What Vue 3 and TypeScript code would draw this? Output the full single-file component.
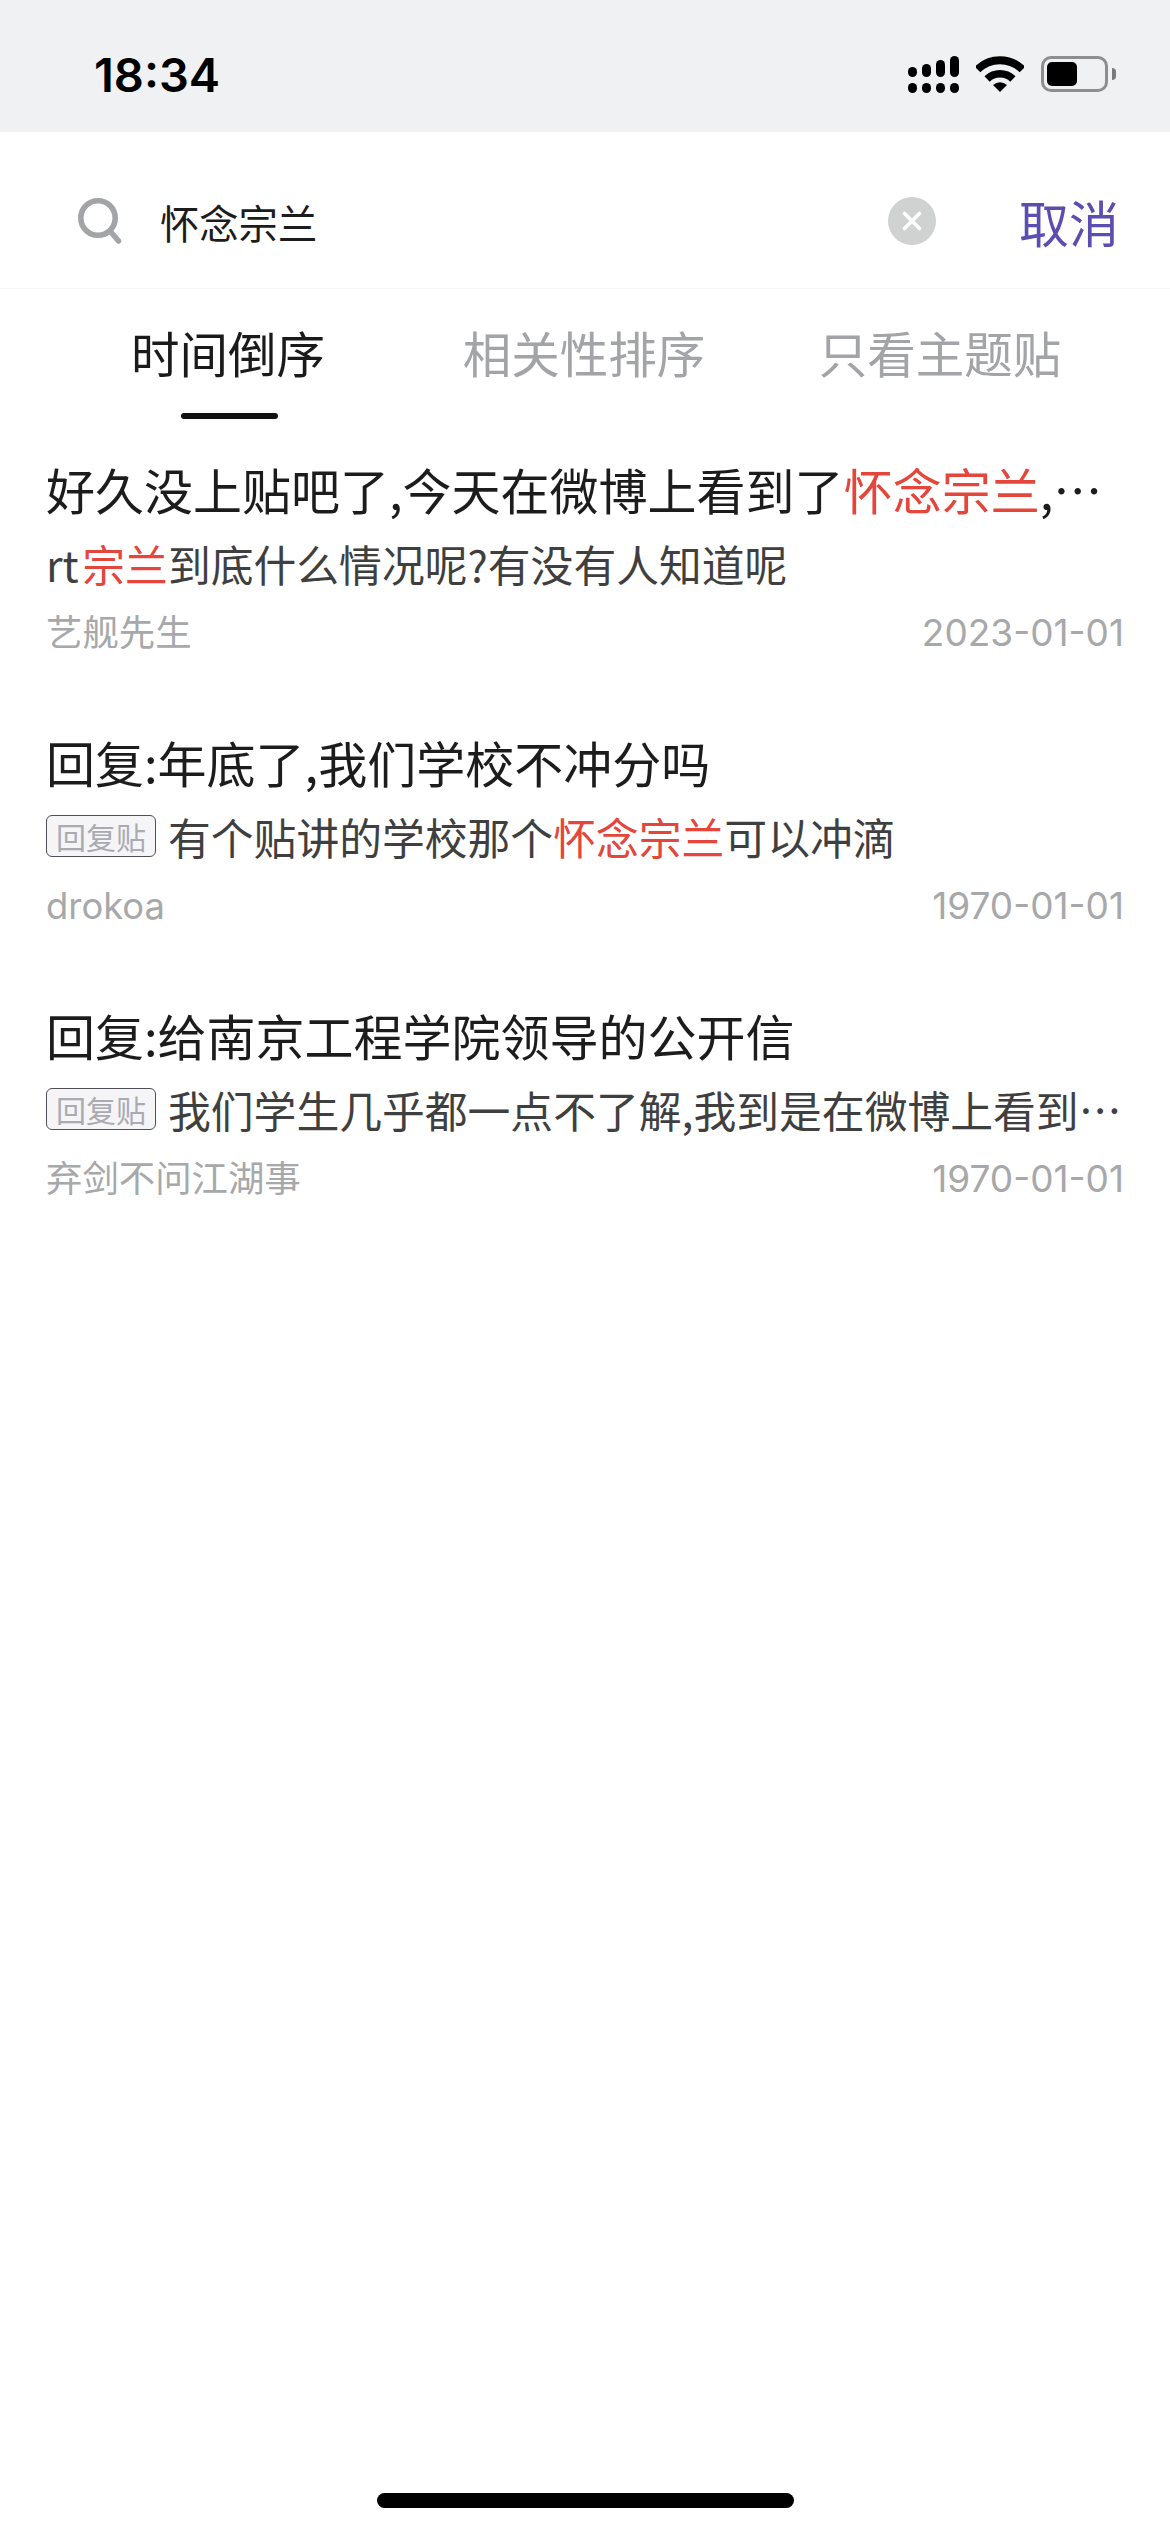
<template>
  <div class="page">
    <!-- 状态栏 -->
    <div class="status-bar">
      <span class="time">18:34</span>
      <div class="status-icons">
        <svg class="signal" width="51" height="37" viewBox="0 0 51 37">
          <rect v-for="bar in signalBars" :key="bar.x" :x="bar.x" :y="bar.y" width="9" :height="bar.h" rx="4.5" />
          <rect v-for="bar in signalBars" :key="bar.x + 'd'" :x="bar.x" y="27" width="9" height="10" rx="4.5" />
        </svg>
        <svg class="wifi" width="48" height="36" viewBox="0 0 48 36">
          <path d="M1.5 13.5A32 32 0 0 1 46.5 13.5" fill="none" stroke="#000" stroke-width="8" />
          <path d="M11.1 23A18.5 18.5 0 0 1 36.9 23" fill="none" stroke="#000" stroke-width="7.5" />
          <path d="M24 36L17 29A10 10 0 0 1 31 29Z" fill="#000" />
        </svg>
        <div class="battery">
          <div class="battery-level"></div>
          <div class="battery-nub"></div>
        </div>
      </div>
    </div>

    <!-- 搜索栏 -->
    <div class="search-bar">
      <svg class="search-icon" width="44" height="46" viewBox="0 0 44 46">
        <circle cx="20" cy="20" r="17.2" fill="none" stroke="#a3a4a8" stroke-width="5.6" />
        <line x1="32" y1="33" x2="40.5" y2="43" stroke="#a3a4a8" stroke-width="5.6" stroke-linecap="round" />
      </svg>
      <span class="keyword">{{ keyword }}</span>
      <svg class="clear-icon" width="48" height="48" viewBox="0 0 48 48">
        <circle cx="24" cy="24" r="24" fill="#d0d2d2" />
        <path d="M16.5 16.5L31.5 31.5M31.5 16.5L16.5 31.5" stroke="#fff" stroke-width="3.6" stroke-linecap="round" />
      </svg>
      <span class="cancel">取消</span>
    </div>

    <!-- 排序 -->
    <div class="tabs">
      <div v-for="(tab, index) in tabs" :key="tab" :class="['tab', { active: index === 0 }]">
        <span>{{ tab }}</span>
        <i class="tab-line"></i>
      </div>
    </div>

    <!-- 结果列表 -->
    <div class="result-list">
      <div v-for="item in results" :key="item.author" class="result-item">
        <div class="title">
          <template v-for="(part, i) in item.title" :key="i">
            <em v-if="part.hit">{{ part.text }}</em>
            <template v-else>{{ part.text }}</template>
          </template>
        </div>
        <div class="summary">
          <span v-if="item.reply" class="reply-tag">回复贴</span>
          <span class="summary-text">
            <template v-for="(part, i) in item.summary" :key="i">
              <em v-if="part.hit">{{ part.text }}</em>
              <template v-else>{{ part.text }}</template>
            </template>
          </span>
        </div>
        <div class="meta">
          <span>{{ item.author }}</span>
          <span class="date">{{ item.date }}</span>
        </div>
      </div>
    </div>

    <div class="home-bar"></div>
  </div>
</template>

<script setup lang="ts">
interface Part {
  text: string;
  hit?: boolean;
}

interface Result {
  title: Part[];
  summary: Part[];
  reply: boolean;
  author: string;
  date: string;
}

const keyword = '怀念宗兰';
const tabs = ['时间倒序', '相关性排序', '只看主题贴'];

const signalBars = [
  { x: 0, y: 11, h: 10 },
  { x: 14, y: 8, h: 13 },
  { x: 28, y: 4, h: 17 },
  { x: 42, y: 0, h: 21 }
];

const results: Result[] = [
  {
    title: [
      { text: '好久没上贴吧了,今天在微博上看到了' },
      { text: '怀念宗兰', hit: true },
      { text: ',不知道是什么情况' }
    ],
    summary: [
      { text: 'rt ' },
      { text: '宗兰', hit: true },
      { text: '到底什么情况呢?有没有人知道呢' }
    ],
    reply: false,
    author: '艺舰先生',
    date: '2023-01-01'
  },
  {
    title: [{ text: '回复:年底了,我们学校不冲分吗' }],
    summary: [
      { text: '有个贴讲的学校那个' },
      { text: '怀念宗兰', hit: true },
      { text: '可以冲滴' }
    ],
    reply: true,
    author: 'drokoa',
    date: '1970-01-01'
  },
  {
    title: [{ text: '回复:给南京工程学院领导的公开信' }],
    summary: [{ text: '我们学生几乎都一点不了解,我到是在微博上看到的一些消息' }],
    reply: true,
    author: '弃剑不问江湖事',
    date: '1970-01-01'
  }
];
</script>

<style>
html,
body {
  background: #fff;
}
</style>

<style scoped>
.page {
  position: relative;
  height: 2532px;
  overflow: hidden;
  background: #fff;
  font-family: "Inter", "Noto Sans CJK SC", sans-serif;
}

.status-bar {
  display: flex;
  justify-content: space-between;
  align-items: center;
  height: 132px;
  padding: 16px 55px 0 94px;
  box-sizing: border-box;
  background: #f0f1f3;
}

.time {
  font-size: 47px;
  font-weight: 600;
  color: #000;
}

.status-icons {
  display: flex;
  align-items: center;
  gap: 17px;
}

.battery {
  position: relative;
  width: 67px;
  height: 36px;
  margin-right: 7px;
  box-sizing: border-box;
  border: 3px solid #8e8e8e;
  border-radius: 10px;
  padding: 3px;
}

.battery-level {
  width: 30px;
  height: 24px;
  background: #000;
  border-radius: 5px;
}

.battery-nub {
  position: absolute;
  right: -11px;
  top: 9px;
  width: 4px;
  height: 12px;
  background: #7a7a7a;
  border-radius: 0 4px 4px 0;
}

.signal {
  fill: #000;
}

.search-bar {
  display: flex;
  align-items: center;
  height: 157px;
  padding: 22px 51px 0 78px;
  box-sizing: border-box;
  border-bottom: 1px solid #f5f5f5;
}

.keyword {
  flex: 1;
  margin-left: 38px;
  font-size: 39.3px;
  color: #1c1c1c;
}

.cancel {
  margin-left: 83px;
  font-size: 50px;
  color: #5c4db1;
}

.tabs {
  display: grid;
  grid-template-columns: repeat(3, 356px);
  height: 131px;
  padding-left: 50px;
}

.tab {
  display: flex;
  flex-direction: column;
  align-items: center;
  padding-top: 37px;
  font-size: 48.5px;
  line-height: 60px;
  color: #a3a4a7;
}

.tab-line {
  width: 97px;
  height: 6px;
  margin: 27px 0 0 2px;
  border-radius: 3px;
}

.tab.active {
  color: #1a1a1a;
}

.tab.active .tab-line {
  background: #111;
}

.result-list {
  display: flex;
  flex-direction: column;
  gap: 80px;
  padding: 42px 46px 0 46px;
  font-family: "Noto Sans CJK SC", sans-serif;
}

.title {
  margin-top: -3px;
  font-size: 49px;
  line-height: 60px;
  color: #1c1c1c;
  white-space: nowrap;
  overflow: hidden;
  text-overflow: ellipsis;
}

em {
  font-style: normal;
  color: #e5463c;
}

.summary {
  display: flex;
  align-items: center;
  gap: 12px;
  margin: 14px -4px 0 0;
  height: 60px;
  font-size: 42.8px;
  color: #3f3f3f;
}

.summary-text {
  flex: 1;
  min-width: 0;
  white-space: nowrap;
  overflow: hidden;
  text-overflow: ellipsis;
  word-spacing: -6px;
}

.reply-tag {
  flex-shrink: 0;
  width: 110px;
  height: 42px;
  box-sizing: border-box;
  border: 1px solid #4f4f55;
  border-radius: 6px;
  background: #f5f5f8;
  color: #a9aab2;
  font-size: 30px;
  line-height: 40px;
  text-align: center;
}

.meta {
  display: flex;
  justify-content: space-between;
  margin-top: 18px;
  font-family: "Inter", "Noto Sans CJK SC", sans-serif;
  font-size: 36.4px;
  line-height: 44px;
  color: #a7a8aa;
}

.date {
  font-size: 37px;
}

.home-bar {
  position: absolute;
  left: 377px;
  bottom: 24px;
  width: 417px;
  height: 15px;
  border-radius: 8px;
  background: #000;
}
</style>
